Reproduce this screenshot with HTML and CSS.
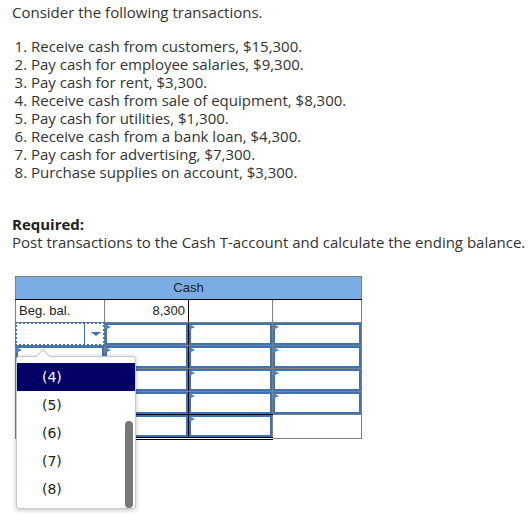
FILE: index.html
```html
<!DOCTYPE html>
<html>
<head>
<meta charset="utf-8">
<title>Cash T-account</title>
<link rel="stylesheet" href="styles.css">
</head>
<body>
<div class="page">
  <p class="intro">Consider the following transactions.</p>
  <ol class="tx">
    <li>Receive cash from customers, $15,300.</li>
    <li>Pay cash for employee salaries, $9,300.</li>
    <li>Pay cash for rent, $3,300.</li>
    <li>Receive cash from sale of equipment, $8,300.</li>
    <li>Pay cash for utilities, $1,300.</li>
    <li>Receive cash from a bank loan, $4,300.</li>
    <li>Pay cash for advertising, $7,300.</li>
    <li>Purchase supplies on account, $3,300.</li>
  </ol>
  <p class="req"><strong>Required:</strong><br>Post transactions to the Cash T-account and calculate the ending balance.</p>

  <div class="tacct">
    <table class="cash">
      <colgroup><col class="c1"><col class="c2"><col class="c3"><col class="c4"></colgroup>
      <thead><tr><th colspan="4">Cash</th></tr></thead>
      <tbody>
        <tr class="beg"><td class="lbl">Beg. bal.</td><td class="num">8,300</td><td></td><td></td></tr>
        <tr>
          <td><div class="sel"><span class="sel-sep"></span><span class="sel-arrow"></span></div></td>
          <td><div class="inp"></div></td><td><div class="inp"></div></td><td><div class="inp"></div></td>
        </tr>
        <tr><td><div class="inp"></div></td><td><div class="inp"></div></td><td><div class="inp"></div></td><td><div class="inp"></div></td></tr>
        <tr><td><div class="inp"></div></td><td><div class="inp"></div></td><td><div class="inp"></div></td><td><div class="inp"></div></td></tr>
        <tr class="pre"><td><div class="inp"></div></td><td><div class="inp"></div></td><td><div class="inp"></div></td><td><div class="inp"></div></td></tr>
        <tr class="total"><td><div class="inp"></div></td><td><div class="inp"></div></td><td><div class="inp"></div></td><td></td></tr>
      </tbody>
    </table>

    <div class="popup">
      <span class="notch"></span>
      <ul class="opts">
        <li class="active">(4)</li>
        <li>(5)</li>
        <li>(6)</li>
        <li>(7)</li>
        <li>(8)</li>
      </ul>
      <span class="scroll"></span>
    </div>
  </div>
</div>
</body>
</html>
```
FILE: styles.css
```css
* { box-sizing: border-box; }

html, body { min-height: 529px; }

body {
  margin: 0;
  background: #fff;
  color: #333;
  font-family: "Open Sans", Lato, sans-serif;
  font-size: 15px;
  line-height: 18px;
}

.page {
  padding: 3px 11px 0 12px;
  min-height: 529px;
}

.intro { margin: 0; }

.tx {
  margin: 16px 0 0;
  padding-left: 19px;
}

.req { margin: 34px 0 0; white-space: nowrap; }
.req strong { font-weight: 700; color: #222; }

.tacct {
  position: relative;
  margin: 25px 0 0 3px;
  width: 347px;
  padding-bottom: 80px;
}

.cash {
  border-collapse: collapse;
  table-layout: fixed;
  width: 347px;
  font-family: "Liberation Sans", Arial, sans-serif;
  font-size: 13px;
  line-height: 22px;
  color: #222;
}

.cash .c1, .cash .c4 { width: 89px; }
.cash .c2, .cash .c3 { width: 84px; }

.cash th, .cash td {
  border: 1px solid #808080;
  padding: 0;
}

.cash th {
  background: #79ade4;
  font-weight: normal;
  height: 22px;
  border-bottom-color: #000;
}

.cash td:nth-child(2) { border-right-color: #000; }
.cash td:nth-child(3) { border-left-color: #000; }
.cash tr.pre td:nth-child(2), .cash tr.pre td:nth-child(3) { border-bottom-color: #000; }
.cash tr.total td:nth-child(2), .cash tr.total td:nth-child(3) { border-bottom: 3px double #000; }

.beg td { height: 22px; }
.beg .lbl { padding-left: 3px; }
.beg .num { text-align: right; padding-right: 3px; }

.inp {
  position: relative;
  height: 22px;
  border: 2px solid #3f72b3;
}
.inp::before {
  content: "";
  position: absolute;
  left: -2px;
  top: -1px;
  border-left: 6px solid #4a82c6;
  border-top: 3px solid transparent;
  border-bottom: 3px solid transparent;
}

.sel { position: relative; height: 22px; }
.sel::before {
  content: "";
  position: absolute;
  inset: -1px;
  border: 2px dotted #3f72b3;
}
.sel-sep {
  position: absolute;
  top: -1px;
  bottom: -1px;
  left: 68px;
  width: 1px;
  background: #3f72b3;
}
.sel-arrow {
  position: absolute;
  left: 75px;
  top: 9px;
  border-left: 5px solid transparent;
  border-right: 5px solid transparent;
  border-top: 4px solid #3f72b3;
}

.popup {
  position: absolute;
  left: 1px;
  top: 80px;
  width: 120px;
  height: 153px;
  background: #fff;
  border: 1px solid #c8c8c8;
  border-radius: 3px;
  box-shadow: 0 1px 5px rgba(0, 0, 0, 0.25);
  padding-top: 6px;
  font-family: "DejaVu Sans", Verdana, sans-serif;
  font-size: 14px;
  color: #222;
}

.notch {
  position: absolute;
  left: 21px;
  top: -6px;
  width: 10px;
  height: 10px;
  background: #fff;
  border-top: 1px solid #c8c8c8;
  border-left: 1px solid #c8c8c8;
  transform: rotate(45deg);
}

.opts {
  position: relative;
  list-style: none;
  margin: 0;
  padding: 0;
}
.opts li {
  height: 28px;
  line-height: 28px;
  padding-left: 25px;
}
.opts li.active {
  background: #020066;
  color: #fff;
}

.scroll {
  position: absolute;
  right: 2px;
  top: 64px;
  width: 8px;
  height: 87px;
  border-radius: 4px;
  background: #777;
}
```
